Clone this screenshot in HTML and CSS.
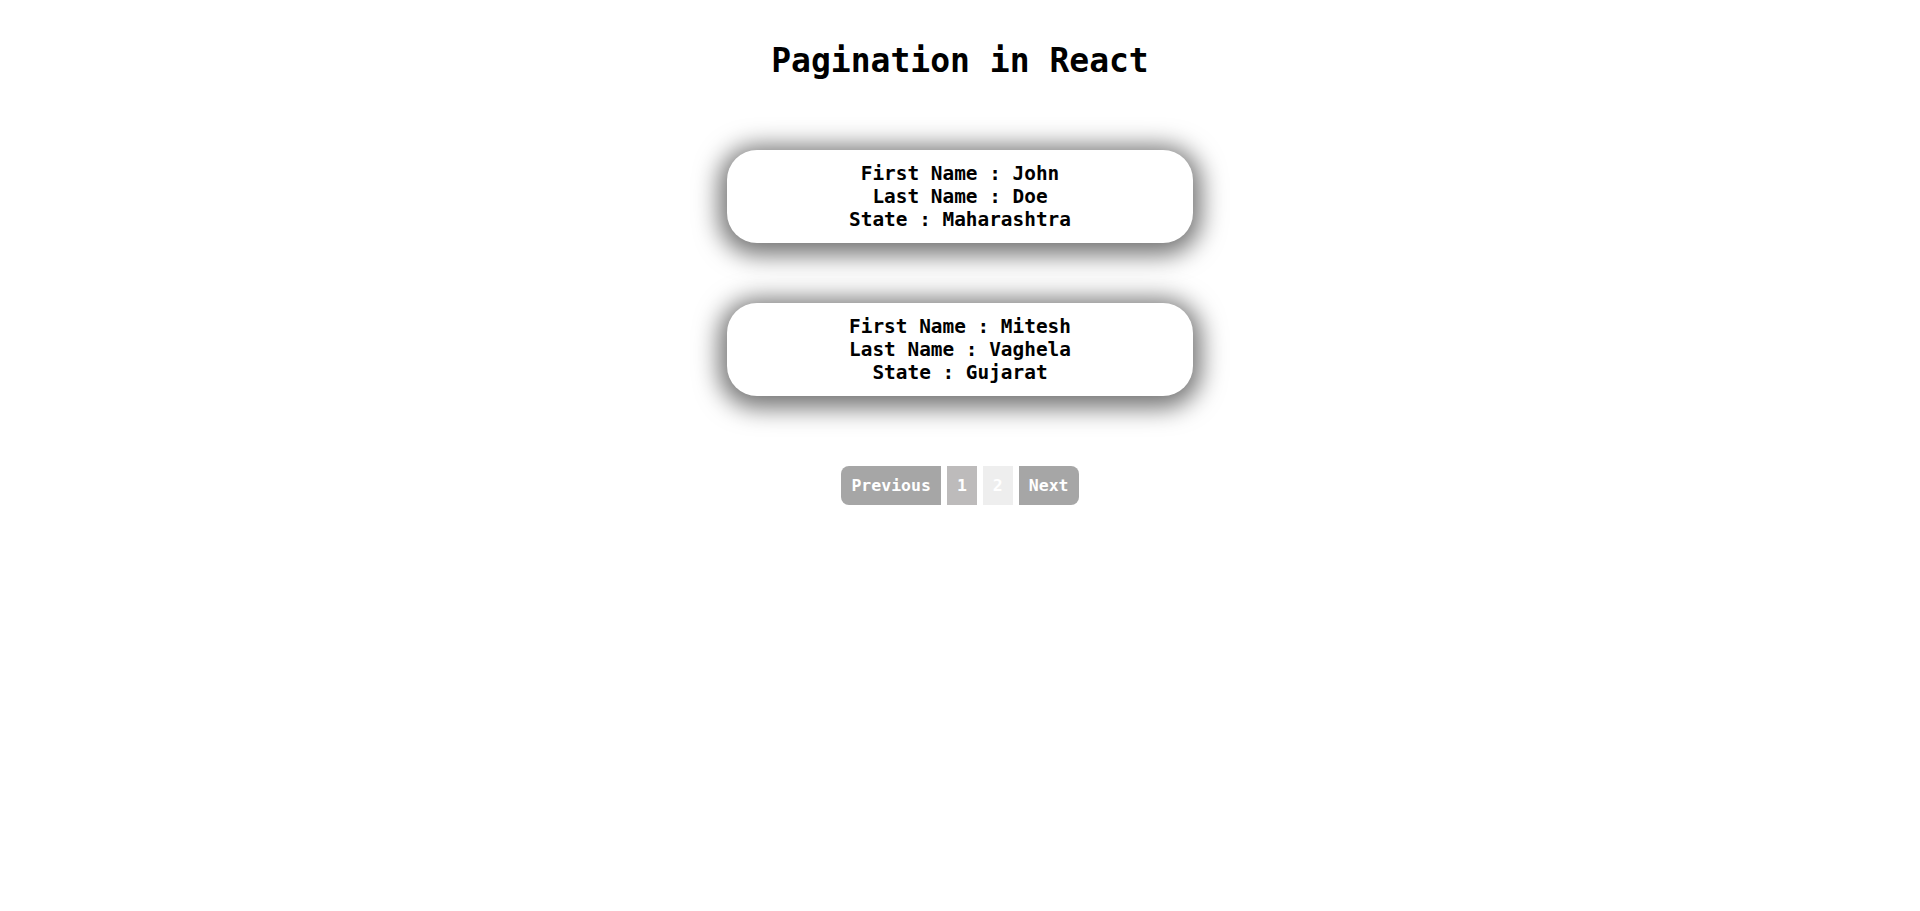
FILE: index.html
```html
<!DOCTYPE html>
<html lang="en">
<head>
<meta charset="utf-8">
<title>Pagination in React</title>
<link rel="stylesheet" href="styles.css">
</head>
<body>
<div class="app">
  <h1 class="title">Pagination in React</h1>
  <div class="list">
    <div class="card">
      <div>First Name : John</div>
      <div>Last Name : Doe</div>
      <div>State : Maharashtra</div>
    </div>
    <div class="card">
      <div>First Name : Mitesh</div>
      <div>Last Name : Vaghela</div>
      <div>State : Gujarat</div>
    </div>
  </div>
  <div class="pagination">
    <button class="pg pg-nav pg-prev">Previous</button>
    <button class="pg pg-num">1</button>
    <button class="pg pg-num pg-active">2</button>
    <button class="pg pg-nav pg-next">Next</button>
  </div>
</div>
</body>
</html>
```

FILE: styles.css
```css
html, body {
  margin: 0;
  padding: 0;
  background: #ffffff;
}

body {
  font-family: "DejaVu Sans Mono", "Liberation Mono", monospace;
  font-weight: bold;
  color: #000;
}

.app {
  display: flex;
  flex-direction: column;
  align-items: center;
  padding-top: 41px;
}

.title {
  margin: 0;
  font-size: 33px;
  line-height: 40px;
  font-weight: bold;
}

.list {
  display: flex;
  flex-direction: column;
  gap: 60px;
  margin-top: 69px;
}

.card {
  width: 466px;
  box-sizing: border-box;
  padding: 12px 0 12px;
  border-radius: 30px;
  background: #fff;
  text-align: center;
  font-size: 19.4px;
  line-height: 23px;
  box-shadow: 0 4px 24px 8px rgba(0, 0, 0, 0.55);
}

.pagination {
  display: flex;
  gap: 6px;
  margin-top: 70px;
}

.pg {
  font-family: inherit;
  font-weight: bold;
  font-size: 16.5px;
  line-height: 19px;
  padding: 10px 10px;
  border: none;
  color: #fff;
  margin: 0;
}

.pg-nav {
  background: #a6a6a6;
}

.pg-prev {
  border-radius: 8px 0 0 8px;
}

.pg-next {
  border-radius: 0 8px 8px 0;
}

.pg-num {
  background: #bdbbbb;
}

.pg-active {
  background: #eeeeee;
}
```
